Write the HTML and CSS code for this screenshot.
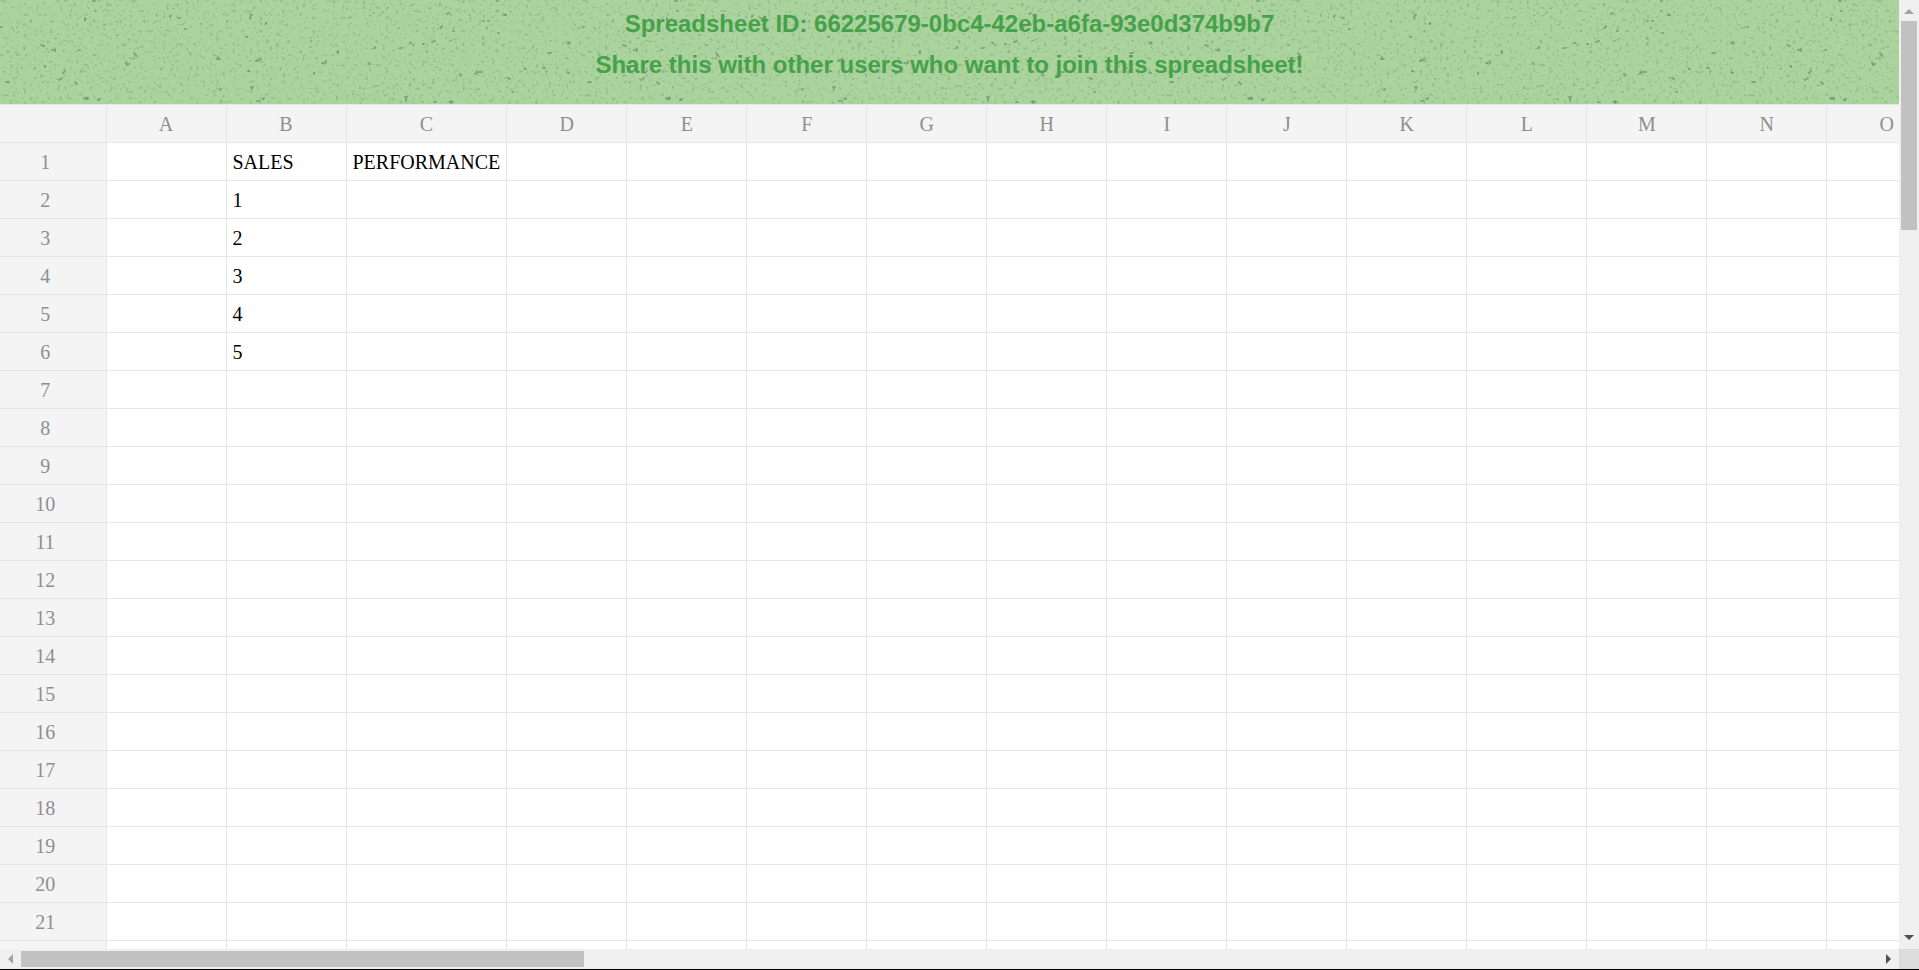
FILE: index.html
```html
<!DOCTYPE html>
<html lang="en">
<head>
<meta charset="utf-8">
<title>Spreadsheet</title>
<link rel="stylesheet" href="styles.css">
</head>
<body>
<main class="viewport">
  <header class="banner">
    <svg class="banner-texture" aria-hidden="true">
      <defs>
        <filter id="grain" x="0" y="0" width="100%" height="100%" color-interpolation-filters="sRGB">
          <feTurbulence type="fractalNoise" baseFrequency="0.3" numOctaves="2" seed="8" stitchTiles="stitch"/>
          <feColorMatrix values="0 0 0 0 0.46  0 0 0 0 0.62  0 0 0 0 0.43  2.500 0 0 0 -1.480"/>
        </filter>
        <pattern id="paper" width="582" height="104" patternUnits="userSpaceOnUse">
          <rect width="582" height="104" filter="url(#grain)"/>
          <g class="fleck-light">
            <path d="M37 9l1-3M84 21l3-2M36 32l2-2M14 31l-1-2M90 26l1-2M15 53l2-2M32 52l1-1M11 68l1-3M31 66l1-1M43 65l3 2M80 72l3-4M84 65h4M58 90l1-4M100 78l3 0M41 75l3 1M98 99l1 2M136 54l2 4M170 17l2-2M153 23l3-1M167 6l1 3M190 55v-3M189 76l1-1M171 68l2 1M154 82l2 2M160 88l-2-3M123 43l2 2M128 39l3 1M140 47h3M129 98h3M106 10l3 1M120 20l1 3M166 30l4 1"/>
            <path d="M247 13l4-2M265 24l2-1M280 24v-2M313 6l2-2M364 1v3M379 16l4-4M391 20h1M394 25l2-1M317 35l2 2M333 47l4-3M286 43l3-2M310 38l2-1M381 35l1-1M204 59l1-2M248 71l2 1M269 86v-2M231 71v-1M307 66l2 1M314 74l1-2M320 73l1-1M371 49l4-1M369 64v-2M374 86l6 0M361 99l2 0M389 100l2-1M214 91l2 0M223 97l1-2M262 99h2M348 26l3-3M276 43l3 2"/>
            <path d="M411 6l3-2M418 20h3M456 11l4-3M459 20l3 0M472 9l4 4M484 15v3M503 13l3 2M540 22l3-4M557 9v2M576 14l3-3M517 33l2-3M450 41l7-3M482 45l3-4M503 46l2-2M528 52l2-2M519 50v-1M569 47l2 2M580 54l2-1M453 81l4-2M460 77l3-2M525 69v-1M535 74v-2M568 73v-2M561 78v1M570 83v-2M416 89h4M432 83h1M475 90l4-1M491 100h2M529 90v2M410 43v-1M424 45l-1-1M437 30l4-3M536 68l2-3"/>
          </g>
          <g class="fleck-dark">
            <path d="M41 45l3 1M52 50h3M55 49v2M93 1h2M95 11h1M59 80l3-2M75 82l2 2M84 98h4M85 99h3M98 100l2-1M126 62l1 3M127 65l2-1M134 53l2 3M79 50h1M6 82h3M1 27h1M85 20v-2M45 66v1M170 16v1M179 18h1M185 29h1M65 71l-2 2"/>
            <path d="M250 18l1-3M251 15h1M217 59l1-2M217 59h3M256 61l2-1M258 60l3-1M322 63l2 0M326 61v2M338 51v2M252 87v2M251 87h2M220 90l1-1M263 99l1-1M257 101h2M248 71h1M314 73v1M369 64h1M375 48v-1M246 37h1M266 23v1"/>
            <path d="M447 14l2-1M441 28l1-2M453 31h1M432 42l3-1M410 43h1M400 48h1M504 15h2M497 1h1M483 21h1M488 21h1M567 43h3M569 44v-2M548 53h3M543 68h2M475 74l3-2M478 72h4M508 78l2 1M525 69h1M405 97h2M406 101v-2M434 102h2M450 102h2M451 101v2M461 75l-1-1M498 33h1M423 44h1M512 92h1M568 73h1"/>
          </g>
        </pattern>
      </defs>
      <rect width="100%" height="100%" fill="url(#paper)"/>
    </svg>
    <h1 class="banner-line">Spreadsheet ID: 66225679-0bc4-42eb-a6fa-93e0d374b9b7</h1>
    <h2 class="banner-line">Share this with other users who want to join this spreadsheet!</h2>
  </header>
  <table class="sheet">
    <thead><tr id="columns"></tr></thead>
    <tbody id="rows"></tbody>
  </table>
</main>
<div class="scrollbar scrollbar-vertical">
  <button class="arrow" type="button" aria-label="Scroll up" disabled><svg viewBox="0 0 20 20"><path d="M5 14h10L10 9z"/></svg></button>
  <div class="track"><div class="thumb"></div></div>
  <button class="arrow" type="button" aria-label="Scroll down"><svg viewBox="0 0 20 20"><path d="M5 6h10L10 11z"/></svg></button>
</div>
<div class="scrollbar scrollbar-horizontal">
  <button class="arrow" type="button" aria-label="Scroll left" disabled><svg viewBox="0 0 20 20"><path d="M13 5v10L8 10z"/></svg></button>
  <div class="track"><div class="thumb"></div></div>
  <button class="arrow" type="button" aria-label="Scroll right"><svg viewBox="0 0 20 20"><path d="M7 5v10l5-5z"/></svg></button>
</div>
<div class="scroll-corner"></div>
<script src="sheet.js"></script>
</body>
</html>
```
FILE: styles.css
```css
* {
  box-sizing: border-box;
}

body {
  margin: 0;
  height: 100vh;
  display: grid;
  grid-template-columns: minmax(0, 1fr) 20px;
  grid-template-rows: minmax(0, 1fr) 20px;
  border-bottom: 1px solid #000;
  background: #fff;
  font-family: "Liberation Serif", "Times New Roman", serif;
}

.viewport {
  overflow: hidden;
}

.banner {
  position: relative;
  height: 104px;
  padding-top: 10px;
  background: #abd39d;
  text-align: center;
}

.banner-texture {
  position: absolute;
  top: 0;
  left: 0;
  width: 100%;
  height: 100%;
}

.fleck-light,
.fleck-dark {
  fill: none;
  stroke: #4f6f49;
  stroke-linecap: round;
}

.fleck-light {
  stroke-width: 1px;
  opacity: 0.35;
}

.fleck-dark {
  stroke-width: 2px;
  opacity: 0.45;
}

.banner-line {
  position: relative;
  margin: 0 0 13px;
  color: #46a14b;
  font: bold 24px/28px "Liberation Sans", Arial, sans-serif;
}

.sheet {
  width: max-content;
  border-collapse: collapse;
  font-size: 20px;
  line-height: 23px;
}

.sheet th,
.sheet td {
  height: 38px;
  min-width: 120px;
  padding: 2px 6px 0;
  border: 1px solid #e6e6e6;
  text-align: left;
  white-space: nowrap;
}

.sheet th {
  background: #f4f4f4;
  color: #8f8f8f;
  font-weight: normal;
  text-align: center;
}

.sheet tr > :first-child {
  min-width: 106px;
  padding-right: 21px;
  border-left: 0;
  background: #f4f4f4;
}

.scrollbar {
  display: flex;
  background: #f0f0f0;
}

.scrollbar-vertical {
  flex-direction: column;
}

.track {
  flex: 1;
  padding: 1px 2px;
}

.scrollbar-horizontal .track {
  padding: 2px 1px;
}

.thumb {
  height: 100%;
  background: #c1c1c1;
}

.scrollbar-vertical .thumb {
  height: 23%;
}

.scrollbar-horizontal .thumb {
  width: 30.3%;
}

.arrow {
  flex: none;
  width: 20px;
  height: 20px;
  padding: 0;
  border: 0;
  background: none;
  color: #505050;
}

.arrow:disabled {
  color: #a3a3a3;
}

.arrow svg {
  display: block;
  fill: currentColor;
}

.scroll-corner {
  background: #dcdcdc;
}
```
FILE: sheet.js
```js
const columns = "ABCDEFGHIJKLMNO".split("");
const rowCount = 22;
const values = {
  B1: "SALES", C1: "PERFORMANCE",
  B2: "1", B3: "2", B4: "3", B5: "4", B6: "5"
};

function addCell(row, tag, text, scope) {
  const cell = document.createElement(tag);
  cell.textContent = text;
  if (scope) cell.scope = scope;
  row.append(cell);
}

const head = document.getElementById("columns");
addCell(head, "td", "");
columns.forEach(name => addCell(head, "th", name, "col"));

const body = document.getElementById("rows");
for (let n = 1; n <= rowCount; n++) {
  const row = document.createElement("tr");
  addCell(row, "th", n, "row");
  columns.forEach(name => addCell(row, "td", values[name + n] || ""));
  body.append(row);
}
```
